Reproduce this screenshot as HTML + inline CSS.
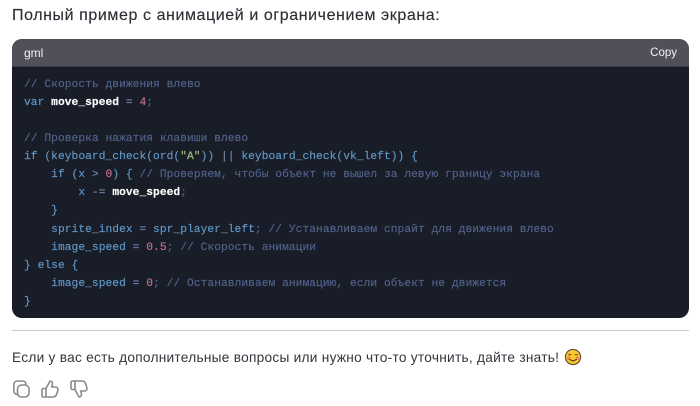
<!DOCTYPE html>
<html>
<head>
<meta charset="utf-8">
<style>
html,body{margin:0;padding:0;background:#fff;}
body{width:700px;height:406px;position:relative;overflow:hidden;font-family:"Liberation Sans",sans-serif;}
.t{position:absolute;white-space:pre;}
#h{left:12px;top:6px;font-size:16px;line-height:20px;color:#2b2f36;letter-spacing:.58px;-webkit-text-stroke:.15px #2b2f36;}
#box{position:absolute;left:12px;top:39px;width:677px;height:279px;border-radius:10px;background:#191d28;overflow:hidden;}
#bar{position:absolute;left:0;top:0;width:677px;height:28px;background:#50505a;border-bottom:1px solid #3a3b45;box-sizing:border-box;}
#g{left:12px;top:6px;font-size:12px;line-height:16px;color:#f2f2f4;}
#c{right:12px;top:6px;font-size:11.5px;line-height:16px;color:#f2f2f4;}
#code{position:absolute;left:12px;top:36.5px;margin:0;font-family:"Liberation Mono",monospace;font-size:11.25px;letter-spacing:.04px;line-height:18.13px;color:#6199c8;white-space:pre;-webkit-text-stroke:.15px currentColor;}
.k{color:#51628a}
.w{color:#fff;font-weight:bold}
.n{color:#c9708c}
.s{color:#9fc27a}
.o{color:#7486ad}
#hr{position:absolute;left:12px;top:330px;width:677px;height:1px;background:#c9c9c9;}
#p{left:12px;top:348px;font-size:13.7px;line-height:20px;color:#33363c;letter-spacing:.26px;}
</style>
</head>
<body>
<div class="t" id="h">Полный пример с анимацией и ограничением экрана:</div>
<div id="box">
<div id="bar"><div class="t" id="g">gml</div><div class="t" id="c">Copy</div></div>
<pre id="code"><span class="k">// Скорость движения влево</span>
var <span class="w">move_speed</span> <span class="o">=</span> <span class="n">4</span><span class="k">;</span>

<span class="k">// Проверка нажатия клавиши влево</span>
if (keyboard_check(ord(<span class="s">"A"</span>)) <span class="o">||</span> keyboard_check(vk_left)) {
    if (x <span class="o">&gt;</span> <span class="n">0</span>) { <span class="k">// Проверяем, чтобы объект не вышел за левую границу экрана</span>
        x <span class="o">-=</span> <span class="w">move_speed</span><span class="k">;</span>
    }
    sprite_index <span class="o">=</span> spr_player_left<span class="k">;</span> <span class="k">// Устанавливаем спрайт для движения влево</span>
    image_speed <span class="o">=</span> <span class="n">0.5</span><span class="k">;</span> <span class="k">// Скорость анимации</span>
} else {
    image_speed <span class="o">=</span> <span class="n">0</span><span class="k">;</span> <span class="k">// Останавливаем анимацию, если объект не движется</span>
}</pre>
</div>
<div id="hr"></div>
<div class="t" id="p">Если у вас есть дополнительные вопросы или нужно что-то уточнить, дайте знать!</div>
<svg style="position:absolute;left:564px;top:348px" width="18" height="18" viewBox="0 0 18 18">
<circle cx="9" cy="9" r="7.6" fill="#fbc531" stroke="#5a4a20" stroke-width="1.1"/>
<circle cx="4.6" cy="10.2" r="1.7" fill="#f2825f"/>
<circle cx="13.4" cy="10.2" r="1.7" fill="#f2825f"/>
<path d="M4.3 7.2q1.4-1.5 2.8 0M10.9 7.2q1.4-1.5 2.8 0" fill="none" stroke="#5a3d10" stroke-width="1"/>
<path d="M5.4 11q3.6 3.6 7.2 0" fill="none" stroke="#5a3d10" stroke-width="1.1"/>
</svg>
<svg style="position:absolute;left:10px;top:378px" width="84" height="24" viewBox="0 0 84 24" fill="none" stroke="#8a8a8a" stroke-width="1.6" stroke-linejoin="round" stroke-linecap="round">
<rect x="7.5" y="7" width="11.5" height="12" rx="4"/>
<path d="M7 16.5C5 16 3.8 14.5 3.8 12.5V7C3.8 4.5 5.3 3 7.5 3H12.5C14.3 3 15.6 4 16 6"/>
<path d="M36 10.5H33.5C32.6 10.5 32 11.2 32 12V17.5C32 18.4 32.6 19 33.5 19H36ZM36 10.5L40 3C41.8 3 42.8 4.5 42.4 6.2L41.7 9H45.2C47.3 9 48.4 10.6 47.8 12.5L46.6 16.3C46.1 18 44.8 19 43 19H36"/>
<path d="M65 11.5H62.5C61.6 11.5 61 10.8 61 10V4.5C61 3.6 61.6 3 62.5 3H65ZM65 11.5L69 19C70.8 19 71.8 17.5 71.4 15.8L70.7 13H74.2C76.3 13 77.4 11.4 76.8 9.5L75.6 5.7C75.1 4 73.8 3 72 3H65"/>
</svg>
</body>
</html>
